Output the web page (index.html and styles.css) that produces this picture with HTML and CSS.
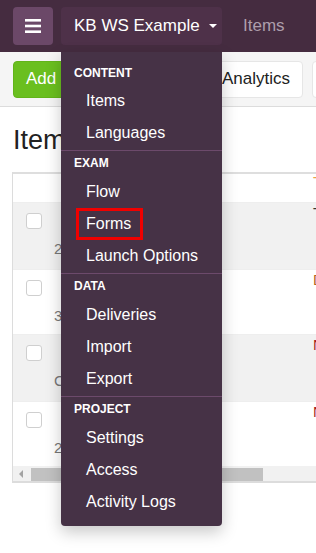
FILE: index.html
```html
<!DOCTYPE html>
<html>
<head>
<meta charset="utf-8">
<link rel="stylesheet" href="styles.css">
</head>
<body>
<header class="navbar">
  <button class="burger" aria-label="menu">
    <svg width="16" height="14" viewBox="0 0 16 14"><rect x="0" y="0" width="16" height="2.6" fill="#fff"/><rect x="0" y="5.7" width="16" height="2.6" fill="#fff"/><rect x="0" y="11.4" width="16" height="2.6" fill="#fff"/></svg>
  </button>
  <button class="brand">KB WS Example <span class="caret"></span></button>
  <a class="navlink">Items</a>
</header>
<div class="toolbar">
  <button class="btn btn-green">Add Item</button>
  <button class="btn btn-white">Analytics</button>
  <button class="btn btn-white btn-more">More</button>
</div>
<main class="content">
  <h1 class="title">Items</h1>
  <div class="table">
    <div class="row head"><span class="cell-right c-orange">T</span></div>
    <div class="row gray"><span class="chk"></span><span class="num">2</span><span class="cell-right c-dark">T</span></div>
    <div class="row"><span class="chk"></span><span class="num">3</span><span class="cell-right c-brown">D</span></div>
    <div class="row gray"><span class="chk"></span><span class="num">C</span><span class="cell-right c-red">N</span></div>
    <div class="row"><span class="chk"></span><span class="num">2</span><span class="cell-right c-red">N</span></div>
    <div class="scrollbar"><span class="arrow"></span><span class="thumb"></span></div>
  </div>
</main>
<nav class="menu">
  <div class="menu-head first">CONTENT</div>
  <a class="menu-item">Items</a>
  <a class="menu-item">Languages</a>
  <div class="divider"></div>
  <div class="menu-head">EXAM</div>
  <a class="menu-item">Flow</a>
  <a class="menu-item"><span class="hl">Forms</span></a>
  <a class="menu-item">Launch Options</a>
  <div class="divider"></div>
  <div class="menu-head">DATA</div>
  <a class="menu-item">Deliveries</a>
  <a class="menu-item">Import</a>
  <a class="menu-item">Export</a>
  <div class="divider"></div>
  <div class="menu-head">PROJECT</div>
  <a class="menu-item">Settings</a>
  <a class="menu-item">Access</a>
  <a class="menu-item">Activity Logs</a>
</nav>
</body>
</html>
```
FILE: styles.css
```css
* { box-sizing: border-box; }
html, body { margin: 0; padding: 0; }
body {
  width: 316px;
  height: 553px;
  overflow: hidden;
  position: relative;
  background: #fff;
  font-family: "Liberation Sans", Arial, sans-serif;
  color: #222;
}
.navbar {
  height: 52px;
  background: #452c40;
  display: flex;
  align-items: center;
  padding: 0 13px;
}
.burger {
  width: 40px;
  height: 38px;
  border: 0;
  border-radius: 4px;
  background: #6b4868;
  display: flex;
  align-items: center;
  justify-content: center;
  padding: 0;
}
.brand {
  margin-left: 8px;
  width: 161px;
  height: 38px;
  border: 0;
  border-radius: 4px;
  background: #4e3149;
  color: #fff;
  font-family: "Liberation Sans", Arial, sans-serif;
  font-size: 17px;
  padding: 0 0 0 13px;
  text-align: left;
  display: flex;
  align-items: center;
}
.caret {
  display: inline-block;
  margin-left: 9px;
  width: 0; height: 0;
  border-left: 4px solid transparent;
  border-right: 4px solid transparent;
  border-top: 4px solid #fff;
}
.navlink {
  margin-left: 21px;
  color: #ad9eab;
  font-size: 17px;
}
.toolbar {
  height: 55px;
  background: #f5f5f5;
  border-bottom: 1px solid #dcdcdc;
  display: flex;
  align-items: center;
  padding: 0 13px;
  gap: 9px;
}
.btn {
  height: 37px;
  border-radius: 4px;
  font-family: "Liberation Sans", Arial, sans-serif;
  font-size: 17px;
  padding: 0 12px;
  flex: none;
}
.btn-green {
  background: #6abf1f;
  color: #fff;
  border: 1px solid #62b41a;
  width: 110px;
  text-align: left;
}
.btn-white {
  background: #fff;
  color: #222;
  border: 1px solid #e6e6e6;
  width: 171px;
  text-align: right;
}
.btn-more { width: 80px; text-align: left; }
.content { padding: 0 0 0 12px; }
.title {
  margin: 17px 0 0 1px;
  font-weight: normal;
  font-size: 27px;
  line-height: 32px;
  color: #222;
}
.table {
  margin-top: 16px;
  border: 1px solid #dcdcdc;
  border-right: 0;
  border-top: 2px solid #dedede;
  width: 304px;
}
.row {
  position: relative;
  height: 65px;
  border-top: 1px solid #eee;
}
.row.head { height: 28px; border-top: 0; }
.row.gray { background: #f1f1f1; height: 67px; }
.chk {
  position: absolute;
  left: 13px;
  top: 10px;
  width: 16px;
  height: 16px;
  border: 1px solid #cfcfcf;
  border-radius: 3px;
  background: #fff;
}
.num {
  position: absolute;
  left: 41px;
  top: 37px;
  font-size: 15px;
  color: #777;
}
.cell-right {
  position: absolute;
  left: 300px;
  top: 1px;
  font-size: 15px;
}
.head .cell-right { top: -1px; }
.c-orange { color: #e9a24a; }
.c-dark { color: #333; }
.c-brown { color: #b5651d; }
.c-red { color: #a51d1d; }
.scrollbar {
  height: 16px;
  background: #f1f1f1;
  border-bottom: 1px solid #dcdcdc;
  position: relative;
}
.arrow {
  position: absolute;
  left: 6px; top: 4px;
  width: 0; height: 0;
  border-top: 4px solid transparent;
  border-bottom: 4px solid transparent;
  border-right: 4px solid #a3a3a3;
}
.thumb {
  position: absolute;
  left: 18px; top: 2px;
  width: 232px; height: 13px;
  background: #c1c1c1;
}
.menu {
  position: absolute;
  left: 61px;
  top: 52px;
  width: 161px;
  height: 474px;
  background: #463246;
  border-radius: 0 0 4px 4px;
  box-shadow: 0 6px 16px rgba(0,0,0,0.22);
  padding-top: 12px;
  display: flex;
  flex-direction: column;
}
.menu-head {
  height: 17px;
  line-height: 17px;
  padding-left: 13px;
  font-size: 12px;
  font-weight: bold;
  color: #fff;
  flex: none;
}
.menu-head.first { height: 17px; line-height: 18px; }
.menu-item {
  height: 32px;
  line-height: 32px;
  padding-left: 25px;
  font-size: 16px;
  color: #fff;
  flex: none;
}
.menu-head + .menu-item { margin-top: 4px; }
.divider {
  height: 1px;
  background: #6c4a6b;
  margin: 1px 0 4px 0;
  flex: none;
}
.hl {
  display: block;
  width: 67px;
  height: 32px;
  line-height: 26px;
  margin-left: -10px;
  padding-left: 7px;
  border: 3px solid #f00000;
}
```
